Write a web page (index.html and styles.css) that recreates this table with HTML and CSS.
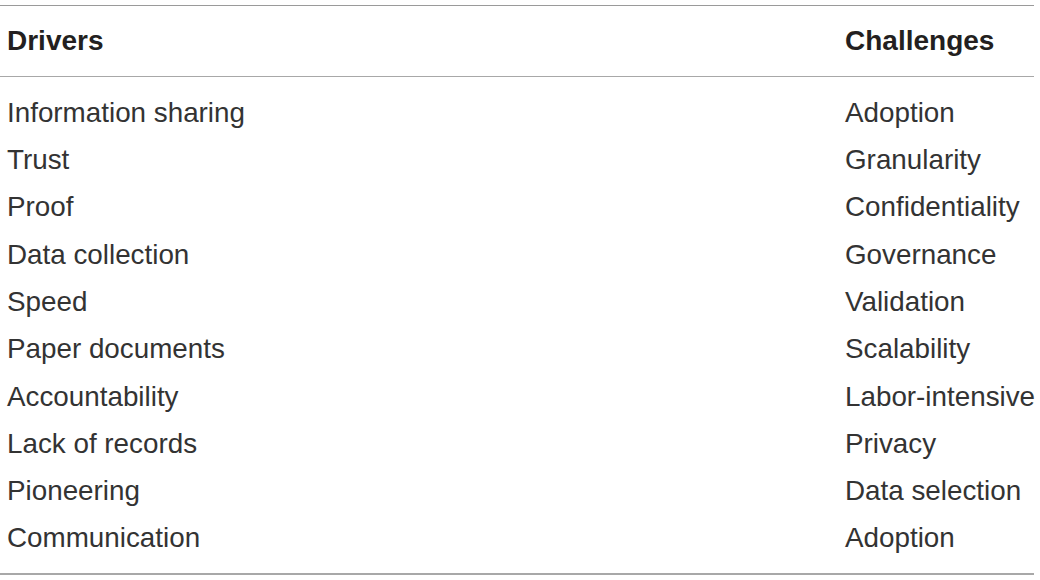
FILE: index.html
```html
<!DOCTYPE html>
<html>
<head>
<meta charset="utf-8">
<link rel="stylesheet" href="styles.css">
</head>
<body>
<div class="table">
  <div class="head">
    <div class="c1">Drivers</div>
    <div class="c2">Challenges</div>
  </div>
  <div class="body">
    <div class="row"><div class="c1">Information sharing</div><div class="c2">Adoption</div></div>
    <div class="row"><div class="c1">Trust</div><div class="c2">Granularity</div></div>
    <div class="row"><div class="c1">Proof</div><div class="c2">Confidentiality</div></div>
    <div class="row"><div class="c1">Data collection</div><div class="c2">Governance</div></div>
    <div class="row"><div class="c1">Speed</div><div class="c2">Validation</div></div>
    <div class="row"><div class="c1">Paper documents</div><div class="c2">Scalability</div></div>
    <div class="row"><div class="c1">Accountability</div><div class="c2">Labor-intensive</div></div>
    <div class="row"><div class="c1">Lack of records</div><div class="c2">Privacy</div></div>
    <div class="row"><div class="c1">Pioneering</div><div class="c2">Data selection</div></div>
    <div class="row"><div class="c1">Communication</div><div class="c2">Adoption</div></div>
  </div>
</div>
</body>
</html>
```

FILE: styles.css
```css
html, body {
  margin: 0;
  padding: 0;
  background: #ffffff;
}
body {
  padding-top: 5px;
  font-family: "Liberation Sans", Arial, sans-serif;
  color: #231f20;
}
.table {
  width: 1034px;
  border-top: 1.5px solid #9a9a9a;
  border-bottom: 2px solid #a8a8a8;
}
.head {
  display: grid;
  grid-template-columns: 845px 1fr;
  height: 70px;
  align-items: center;
  border-bottom: 1.5px solid #a8a8a8;
  font-weight: bold;
  font-size: 28px;
}
.c1 {
  padding-left: 7px;
}
.c1, .c2 {
  white-space: nowrap;
}
.body {
  padding: 12px 0 11px;
  font-size: 27.8px;
  color: #333333;
}
.row {
  display: grid;
  grid-template-columns: 845px 1fr;
  height: 47.3px;
  align-items: center;
  line-height: 1;
}
```
